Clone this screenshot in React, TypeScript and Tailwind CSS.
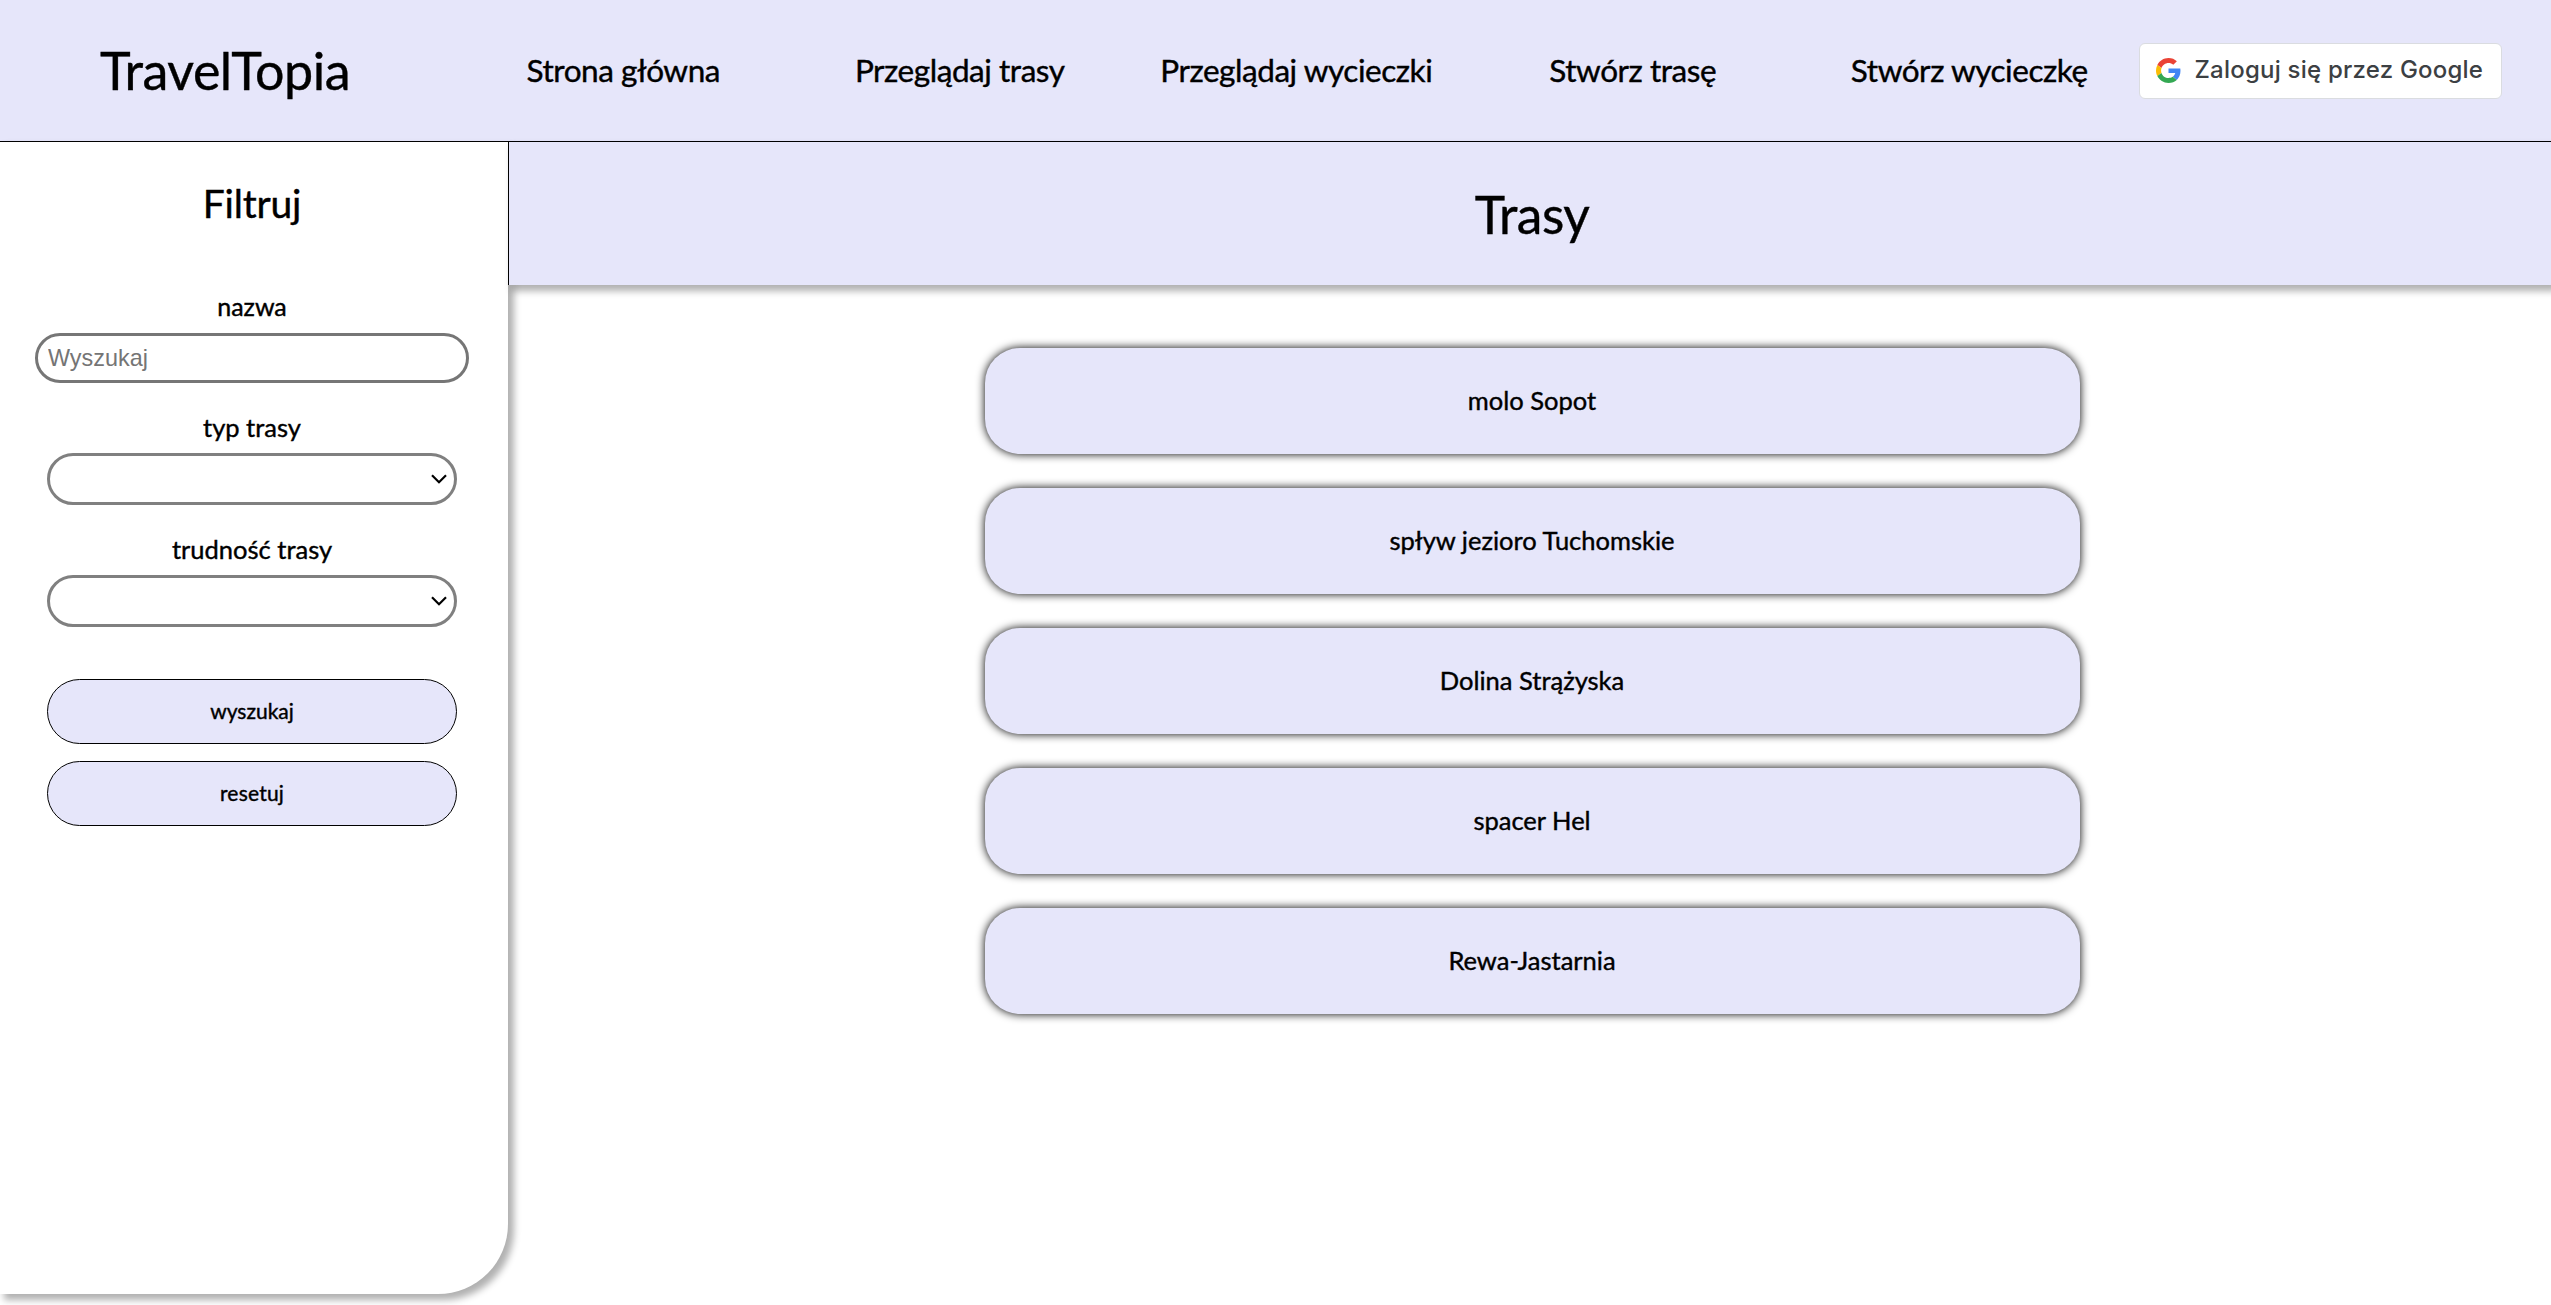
const navItems = ["Strona główna", "Przeglądaj trasy", "Przeglądaj wycieczki", "Stwórz trasę", "Stwórz wycieczkę"];
const routes = ["molo Sopot", "spływ jezioro Tuchomskie", "Dolina Strążyska", "spacer Hel", "Rewa-Jastarnia"];

function GoogleLogo() {
  return (
    <svg viewBox="0 0 48 48" className="h-[25px] w-[25px] shrink-0">
      <path fill="#EA4335" d="M24 9.5c3.54 0 6.71 1.22 9.21 3.6l6.85-6.85C35.9 2.38 30.47 0 24 0 14.62 0 6.51 5.38 2.56 13.22l7.98 6.19C12.43 13.72 17.74 9.5 24 9.5z" />
      <path fill="#4285F4" d="M46.98 24.55c0-1.57-.15-3.09-.38-4.55H24v9.02h12.94c-.58 2.96-2.26 5.48-4.78 7.18l7.73 6c4.51-4.18 7.09-10.36 7.09-17.65z" />
      <path fill="#FBBC05" d="M10.53 28.59c-.48-1.45-.76-2.99-.76-4.59s.27-3.14.76-4.59l-7.98-6.19C.92 16.46 0 20.12 0 24c0 3.88.92 7.54 2.56 10.78l7.97-6.19z" />
      <path fill="#34A853" d="M24 48c6.48 0 11.93-2.13 15.89-5.81l-7.73-6c-2.15 1.45-4.92 2.3-8.16 2.3-6.26 0-11.57-4.22-13.47-9.91l-7.98 6.19C6.51 42.62 14.62 48 24 48z" />
    </svg>
  );
}

function SelectField({ label }: { label: string }) {
  return (
    <label className="mt-[28px] flex flex-col items-center">
      <span className="h-[42px] text-[25.5px] leading-[32px]">{label}</span>
      <span className="flex h-[52px] w-[410px] items-center justify-end rounded-full border-[3px] border-[#808080] bg-white pr-[7px]">
        <svg viewBox="0 0 16 10" className="h-[10px] w-4" fill="none" stroke="#000" strokeWidth="2.2">
          <path d="M1 1.2 8 8.2 15 1.2" />
        </svg>
      </span>
    </label>
  );
}

export default function App() {
  return (
    <div className="flex h-[1305px] w-[2551px] flex-col overflow-hidden bg-white font-['Lato',sans-serif] text-black [-webkit-text-stroke:0.4px_#000]">
      <header className="flex h-[142px] shrink-0 items-center border-b border-black bg-[#e6e6fa]">
        <div className="w-[450px] pb-[2px] text-center text-[52px] leading-[64px] tracking-[-0.5px]">TravelTopia</div>
        <nav className="ml-[5px] flex pb-[2px]">
          {navItems.map((item) => (
            <a key={item} className="w-[336.5px] text-center text-[31.5px] leading-[40px] whitespace-nowrap tracking-[-0.45px]">{item}</a>
          ))}
        </nav>
        <button className="ml-[1px] flex h-[56px] w-[363px] items-center rounded-[6px] border border-[#dadce0] bg-white pl-[16px] font-['Inter',sans-serif] text-[24px] font-medium tracking-[0.22px] whitespace-nowrap text-[#3c4043] [-webkit-text-stroke:0]">
          <GoogleLogo />
          <span className="mb-[2px] ml-[14px]">Zaloguj się przez Google</span>
        </button>
      </header>

      <div className="flex flex-1 items-start">
        <aside className="flex h-[1152px] w-[508px] shrink-0 flex-col items-center rounded-br-[70px] bg-white pr-[4px] shadow-[5px_5px_7px_1px_rgba(0,0,0,0.31)]">
          <h2 className="mt-[36px] h-[112px] text-[39px] leading-[50px] tracking-[-0.2px]">Filtruj</h2>
          <label className="flex flex-col items-center">
            <span className="h-[43px] text-[25px] leading-[32px]">nazwa</span>
            <input
              placeholder="Wyszukaj"
              className="h-[50px] w-[434px] rounded-full border-[3px] border-[#767676] bg-white px-[10px] font-['Liberation_Sans',sans-serif] text-[23.4px] [-webkit-text-stroke:0] placeholder:text-[#757575]"
            />
          </label>
          <SelectField label="typ trasy" />
          <SelectField label="trudność trasy" />
          <button className="mt-[52px] h-[65px] w-[410px] rounded-full border border-black bg-[#e6e6fa] pb-[2px] text-[21px]">wyszukaj</button>
          <button className="mt-[17px] h-[65px] w-[410px] rounded-full border border-black bg-[#e6e6fa] pb-px text-[21px] tracking-[0.2px]">resetuj</button>
        </aside>

        <main className="flex flex-1 flex-col">
          <h1 className="flex h-[143px] items-center justify-center border-l border-black bg-[#e6e6fa] pt-[2px] pl-[4px] text-[51.5px] tracking-[-0.5px] shadow-[5px_5px_7px_1px_rgba(0,0,0,0.31)]">Trasy</h1>
          <ul className="mt-[63px] flex flex-col items-center gap-[34px] pl-[5px]">
            {routes.map((route) => (
              <li key={route} className="flex h-[106px] w-[1095px] items-center justify-center rounded-[35px] bg-[#e6e6fa] pb-[2px] text-[25.5px] shadow-[0_0_10px_#000]">{route}</li>
            ))}
          </ul>
        </main>
      </div>
    </div>
  );
}
